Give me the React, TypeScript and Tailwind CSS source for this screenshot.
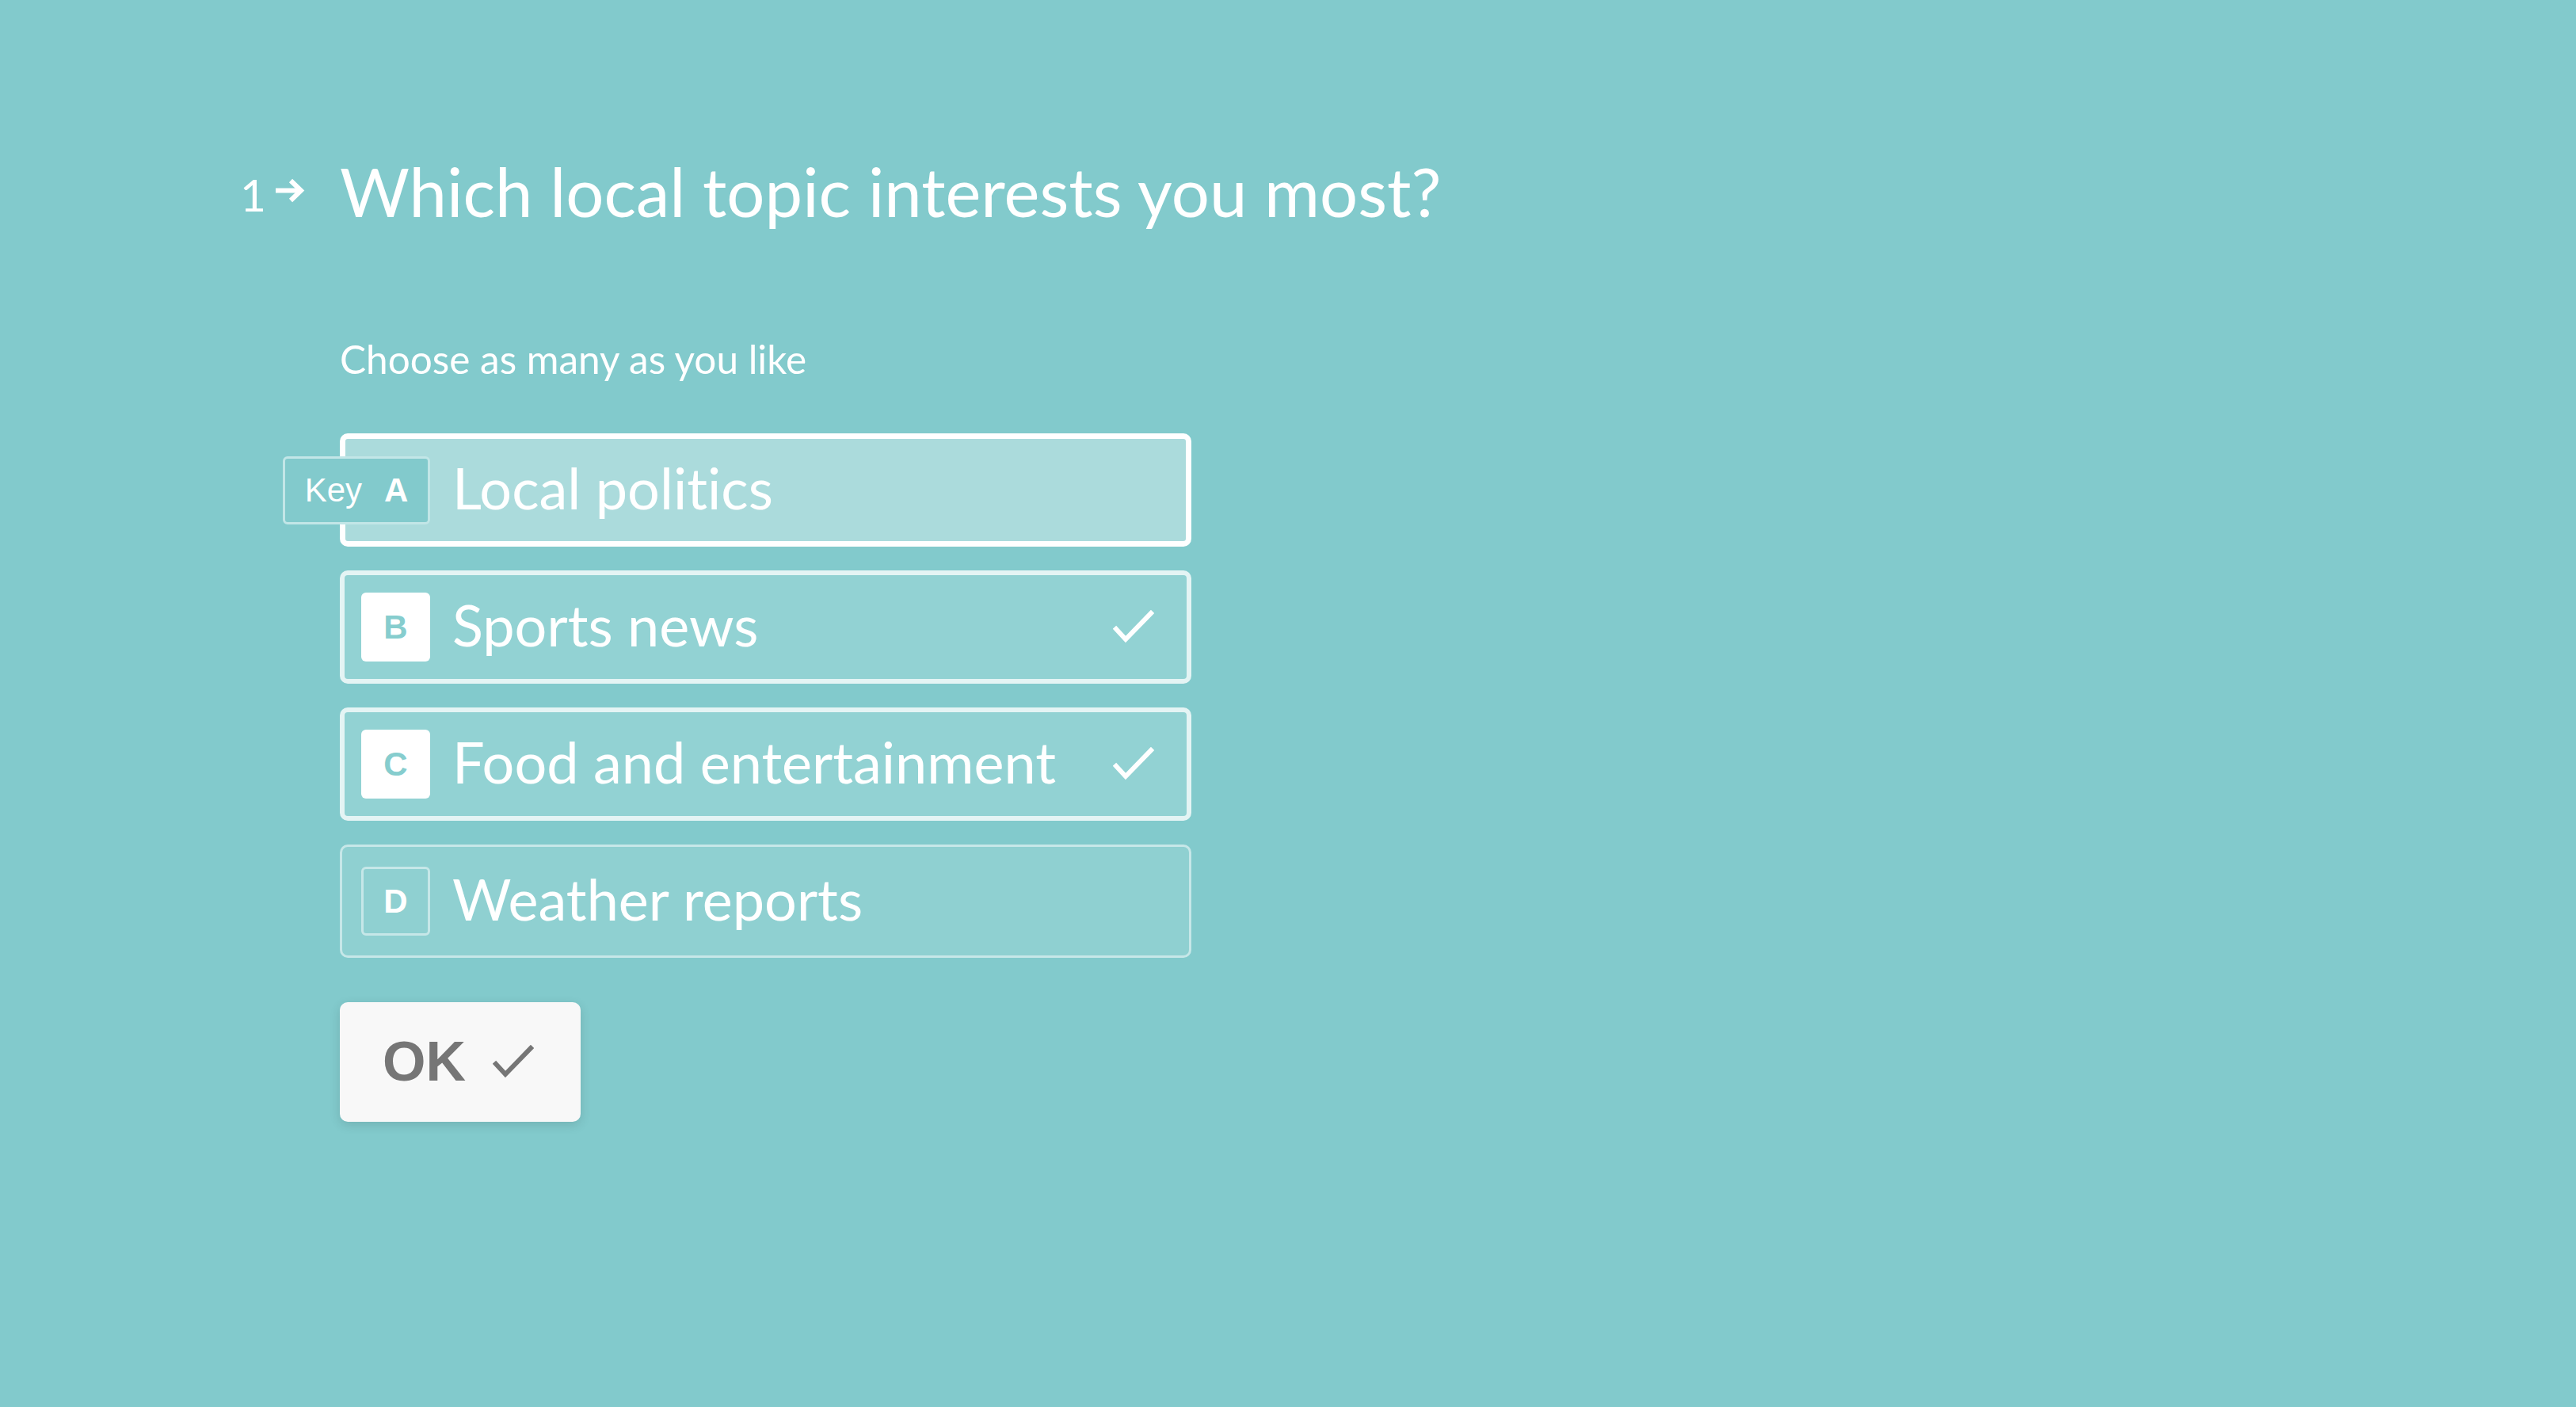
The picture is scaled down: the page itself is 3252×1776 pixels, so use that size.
import React from 'react';

type Choice = {
  key: string;
  label: string;
  state: 'focus' | 'selected' | 'idle';
};

const choices: Choice[] = [
  { key: 'A', label: 'Local politics', state: 'focus' },
  { key: 'B', label: 'Sports news', state: 'selected' },
  { key: 'C', label: 'Food and entertainment', state: 'selected' },
  { key: 'D', label: 'Weather reports', state: 'idle' },
];

const lato = "font-['Lato','Noto_Sans',sans-serif] [font-variant-ligatures:no-common-ligatures]";
const arial = "font-['Liberation_Sans','Arial',sans-serif]";

const Check = ({ className }: { className?: string }) => (
  <svg viewBox="0 0 52 43" className={className} fill="none" stroke="currentColor" strokeWidth={6} strokeLinecap="square">
    <polyline points="4,24 16,37 48,4" />
  </svg>
);

const ChoiceRow = ({ choice }: { choice: Choice }) => {
  const boxClass =
    choice.state === 'focus'
      ? 'border-[7px] border-white bg-[#abdbdc] pl-[20px]'
      : choice.state === 'selected'
        ? 'border-[6px] border-[#e4f4f4] bg-[#92d2d3] pl-[21px]'
        : 'border-[3px] border-[#c6e7e8] bg-[#8fd0d1] pl-[24px]';

  return (
    <div className={`flex h-[143px] w-[1075px] items-center rounded-[10px] pr-[41px] ${boxClass}`}>
      {choice.state === 'focus' ? (
        // キーボードヒント
        <div className={`ml-[-99px] flex h-[86px] w-[186px] shrink-0 items-center justify-center gap-[28px] rounded-[6px] border-[3px] border-[#c2e6e7] bg-[#82cacc] text-[42px] text-white ${arial}`}>
          <span>Key</span>
          <span className="font-bold">{choice.key}</span>
        </div>
      ) : choice.state === 'selected' ? (
        <div className={`flex h-[87px] w-[87px] shrink-0 items-center justify-center rounded-[6px] bg-white text-[42px] font-bold text-[#86cdce] ${arial}`}>
          {choice.key}
        </div>
      ) : (
        <div className={`flex h-[87px] w-[87px] shrink-0 items-center justify-center rounded-[6px] border-[3px] border-[#c6e7e8] text-[42px] font-bold text-white ${arial}`}>
          {choice.key}
        </div>
      )}
      <span className={`mb-[8px] ml-[28px] text-[72px] leading-[1.2] text-white ${lato}`}>{choice.label}</span>
      {choice.state === 'selected' && <Check className="ml-auto h-[43px] w-[52px] text-white" />}
    </div>
  );
};

const App: React.FC = () => {
  return (
    <div className="min-h-screen w-full bg-[#82cacc] pl-[303px] pt-[190px]">
      <div className="flex items-start">
        {/* 質問番号 */}
        <div className={`mt-[21px] flex w-[126px] shrink-0 items-center text-white ${lato}`}>
          <span className="text-[57px] leading-[1.2]">1</span>
          <svg viewBox="0 0 38 31" className="ml-[12px] mt-[-10px] h-[31px] w-[38px]" fill="none" stroke="currentColor" strokeWidth={6}>
            <line x1="0" y1="15.5" x2="32" y2="15.5" />
            <polyline points="19,3 32,15.5 19,28" />
          </svg>
        </div>
        <div className="flex flex-col">
          <h1 className={`text-[85px] font-normal leading-[1.2] text-white ${lato}`}>Which local topic interests you most?</h1>
          <p className={`mt-[132px] text-[49.5px] leading-[1.2] text-white ${lato}`}>Choose as many as you like</p>
          <div className="mt-[64px] flex flex-col gap-[30px]">
            {choices.map((c) => (
              <ChoiceRow key={c.key} choice={c} />
            ))}
          </div>
          <button
            className={`mt-[56px] flex h-[151px] w-[304px] items-center rounded-[10px] bg-[#f8f8f8] pl-[54px] text-[70px] font-bold text-[#767676] shadow-[0_4px_14px_rgba(0,0,0,0.12)] ${arial}`}
          >
            <span>OK</span>
            <Check className="ml-[34px] h-[43px] w-[52px] text-[#767676]" />
          </button>
        </div>
      </div>
    </div>
  );
};

export default App;
